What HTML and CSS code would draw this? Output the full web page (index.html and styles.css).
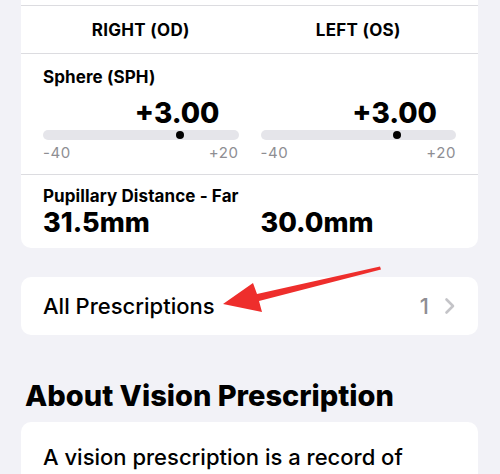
FILE: index.html
```html
<!DOCTYPE html>
<html lang="en">
<head>
  <meta charset="UTF-8" />
  <meta name="viewport" content="width=device-width, initial-scale=1.0"/>
  <title>Vision Prescription</title>
  <link rel="stylesheet" href="styles.css">
</head>
<body>
  <div class="page">
    <div class="card rx-card">
      <div class="row row-tail"></div>

      <div class="row cols eye-head">
        <div class="eye-name">RIGHT (OD)</div>
        <div class="eye-name">LEFT (OS)</div>
      </div>

      <div class="row sphere">
        <div class="field-title">Sphere (SPH)</div>
        <div class="cols">
          <div class="meter">
            <div class="meter-value">+3.00</div>
            <div class="track"><span class="thumb" style="left: 70%"></span></div>
            <div class="meter-range"><span>-40</span><span>+20</span></div>
          </div>
          <div class="meter">
            <div class="meter-value">+3.00</div>
            <div class="track"><span class="thumb" style="left: 70%"></span></div>
            <div class="meter-range"><span>-40</span><span>+20</span></div>
          </div>
        </div>
      </div>

      <div class="row pd">
        <div class="field-title">Pupillary Distance - Far</div>
        <div class="cols">
          <div class="pd-value">31.5mm</div>
          <div class="pd-value">30.0mm</div>
        </div>
      </div>
    </div>

    <div class="card link-row">
      <span class="link-label">All Prescriptions</span>
      <span class="link-count">1</span>
      <svg class="chevron" width="12" height="18" viewBox="0 0 12 18">
        <path d="M2.5 2.5 L9 9 L2.5 15.5" fill="none" stroke="#c4c4c8" stroke-width="2.6" stroke-linecap="round" stroke-linejoin="round"/>
      </svg>
    </div>

    <h2 class="section-title">About Vision Prescription</h2>

    <div class="card about">
      <p>A vision prescription is a record of</p>
    </div>
  </div>

  <!-- annotation arrow -->
  <svg class="pointer" width="500" height="474" viewBox="0 0 500 474">
    <polygon points="223,304 253,283 257,294 380,266.5 381,269.5 259,301 262,312" fill="#ee2e2c"/>
  </svg>
</body>
</html>
```

FILE: styles.css
```css
body {
  margin: 0;
  background: #f2f2f7;
  font-family: Inter, "Noto Sans", sans-serif;
  color: #000;
  overflow: hidden;
}

.page {
  padding: 0 22px 0 21px;
}

.card {
  background: #fff;
  border-radius: 10px;
}

.rx-card {
  border-radius: 0 0 10px 10px;
}

.row {
  border-bottom: 1px solid #dcdce0;
}

.row:last-child {
  border-bottom: none;
}

.row-tail {
  height: 5px;
}

.cols {
  display: grid;
  grid-template-columns: 1fr 1fr;
  column-gap: 22px;
}

.eye-head {
  padding: 0 22px;
  height: 47px;
  align-items: center;
}

.eye-name {
  text-align: center;
  font-size: 17px;
  font-weight: 700;
  letter-spacing: 0.3px;
}

.sphere {
  padding: 13px 22px 13px;
}

.field-title {
  font-size: 17px;
  font-weight: 700;
  line-height: 20px;
  letter-spacing: 0.1px;
}

.meter-value {
  text-align: right;
  padding-right: 19px;
  font-size: 28px;
  font-weight: 800;
  line-height: 32px;
  margin-top: 10px;
}

.track {
  position: relative;
  height: 10px;
  border-radius: 5px;
  background: #e5e5ea;
  margin-top: 1px;
}

.thumb {
  position: absolute;
  top: 1px;
  width: 8px;
  height: 8px;
  margin-left: -4px;
  border-radius: 50%;
  background: #000;
}

.meter-range {
  display: flex;
  justify-content: space-between;
  font-size: 15px;
  letter-spacing: 0.6px;
  color: #8e8e93;
  line-height: 16px;
  margin-top: 5px;
}

.pd {
  padding: 11px 22px 10px;
}

.pd-value {
  font-size: 27px;
  font-weight: 800;
  line-height: 30px;
  margin-top: 2px;
}

.link-row {
  margin-top: 29px;
  height: 58px;
  display: flex;
  align-items: center;
  padding: 0 22px;
}

.link-label {
  flex: 1;
  font-size: 22px;
  font-weight: 500;
}

.link-count {
  font-size: 22px;
  font-weight: 500;
  color: #8e8e93;
  margin-right: 15px;
}

.chevron {
  display: block;
}

.section-title {
  margin: 44px 0 0 4px;
  font-size: 29px;
  font-weight: 800;
  line-height: 34px;
}

.about {
  margin-top: 9px;
  padding: 22px 22px;
  border-radius: 10px 10px 0 0;
}

.about p {
  margin: 0;
  font-size: 22px;
  font-weight: 500;
  line-height: 26px;
}

.pointer {
  position: absolute;
  top: 0;
  left: 0;
  pointer-events: none;
}
```
